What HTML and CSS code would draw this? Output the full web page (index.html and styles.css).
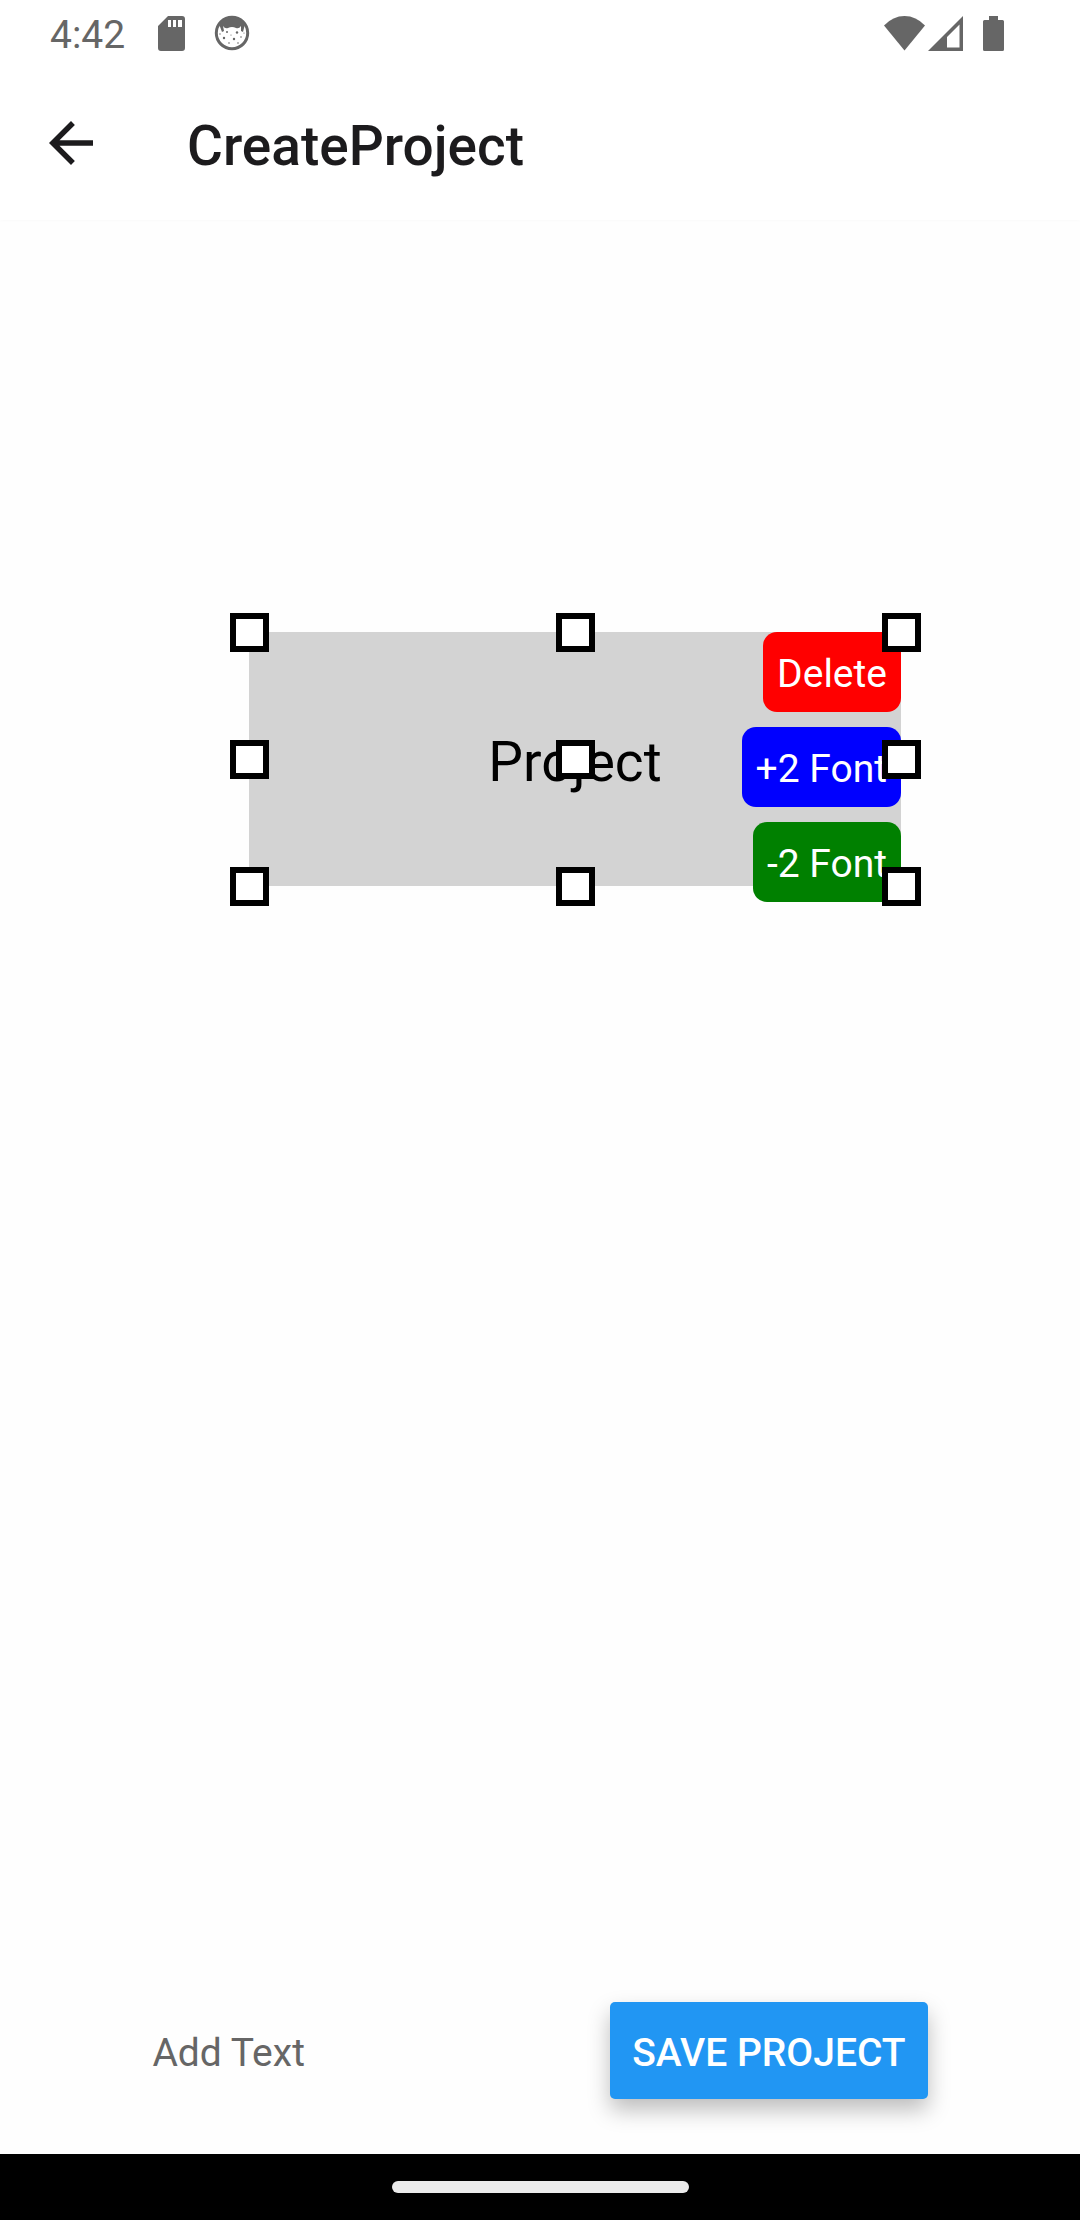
FILE: index.html
```html
<!DOCTYPE html>
<html lang="en">
<head>
<meta charset="utf-8">
<meta name="viewport" content="width=device-width, initial-scale=1">
<title>CreateProject</title>
<link rel="stylesheet" href="styles.css">
</head>
<body>
<div class="status-bar">
  <div class="status-left">
    <span class="clock">4:42</span>
    <svg class="sd-icon" viewBox="0 0 27 35" aria-hidden="true">
      <path fill="currentColor" fill-rule="evenodd" d="M10 0H24Q27 0 27 3V32Q27 35 24 35H3Q0 35 0 32V10ZM10 4V11H13V4ZM15 4V11H18V4ZM20 4V11H24V4Z"/>
    </svg>
    <svg class="face-icon" viewBox="0 0 36 36" aria-hidden="true">
      <circle cx="18" cy="18" r="15.700" fill="none" stroke="currentColor" stroke-width="3"/>
      <path fill="currentColor" d="M5 9Q10 2 18 2T31 9L29 17L27 16L27 11Q25 14 22 13Q18 11 14 13Q11 14 9 11L10 16L8 17Z"/>
      <g fill="currentColor">
        <circle cx="13" cy="17" r="1"/><circle cx="23" cy="17.500" r="1.200"/><circle cx="10" cy="23" r="1.200"/><circle cx="20" cy="24" r="1.200"/><circle cx="27" cy="22" r=".8"/><circle cx="15" cy="28" r=".8"/><circle cx="6" cy="19" r=".7"/><circle cx="17" cy="20" r=".6"/><circle cx="24" cy="28" r=".8"/><circle cx="30" cy="18" r=".6"/>
      </g>
    </svg>
  </div>
  <div class="status-right">
    <svg class="wifi-icon" viewBox="0 0 41 35" aria-hidden="true">
      <path fill="currentColor" d="M0 9.500Q9 0 20.500 0T41 9.500L20.500 34.500Z"/>
    </svg>
    <svg class="signal-icon" viewBox="0 0 35 35" aria-hidden="true">
      <path fill="currentColor" fill-rule="evenodd" d="M35 0V35H0ZM31.500 8.500L19 21V31.500H31.500Z"/>
    </svg>
    <svg class="battery-icon" viewBox="0 0 21 35" aria-hidden="true">
      <path fill="currentColor" d="M6 0H15V4H19.500Q21 4 21 5.500V33.500Q21 35 19.500 35H1.500Q0 35 0 33.500V5.500Q0 4 1.500 4H6Z"/>
    </svg>
  </div>
</div>
<header class="app-bar">
  <button class="back" type="button" aria-label="Back">
    <svg class="back-icon" viewBox="0 0 44 44" aria-hidden="true">
      <path fill="currentColor" d="M44 19.250H10.530L25.900 3.880L22 0L0 22L22 44L25.880 40.120L10.530 24.750H44Z"/>
    </svg>
  </button>
  <h1 class="title">CreateProject</h1>
</header>
<main class="editor">
  <section class="canvas">
    <div class="item">
      <span class="item-text">Project</span>
      <div class="item-actions">
        <button class="action delete" type="button">Delete</button>
        <button class="action grow" type="button">+2 Font</button>
        <button class="action shrink" type="button">-2 Font</button>
      </div>
      <i class="handle top left"></i>
      <i class="handle top center"></i>
      <i class="handle top right"></i>
      <i class="handle middle left"></i>
      <i class="handle middle center"></i>
      <i class="handle middle right"></i>
      <i class="handle bottom left"></i>
      <i class="handle bottom center"></i>
      <i class="handle bottom right"></i>
    </div>
  </section>
  <form class="toolbar">
    <input class="add-text" type="text" placeholder="Add Text" aria-label="Add Text">
    <button class="save" type="button">SAVE PROJECT</button>
  </form>
</main>
<div class="nav-bar"><span class="nav-pill"></span></div>
</body>
</html>
```
FILE: styles.css
```css
* {
  box-sizing: border-box;
}

body {
  margin: 0;
  min-height: 100vh;
  display: flex;
  flex-direction: column;
  background: #fefefe;
  color: #1c1b1d;
  font-family: Roboto, "Liberation Sans", sans-serif;
  font-size: 39px;
  line-height: 52px;
}

button,
input {
  font: inherit;
  border: 0;
  margin: 0;
  padding: 0;
}

svg {
  display: block;
}

.status-bar {
  display: flex;
  justify-content: space-between;
  height: 66px;
  padding: 8px 76px 0 50px;
  background: #fff;
  color: #666;
}

.status-left,
.status-right {
  display: flex;
  align-items: center;
  height: 50px;
}

.clock {
  padding-top: 4px;
}

.sd-icon {
  width: 27px;
  height: 35px;
  margin-left: 33px;
}

.face-icon {
  width: 36px;
  height: 36px;
  margin-left: 29px;
}

.wifi-icon {
  width: 41px;
  height: 35px;
}

.signal-icon {
  width: 35px;
  height: 35px;
  margin-left: 3px;
}

.battery-icon {
  width: 21px;
  height: 35px;
  margin-left: 20px;
}

.app-bar {
  display: flex;
  align-items: center;
  gap: 94px;
  height: 154px;
  padding: 0 49px;
  background: #fff;
  box-shadow: 0 1px 3px rgba(0, 0, 0, 0.02);
}

.back {
  background: none;
  color: inherit;
}

.back-icon {
  width: 44px;
  height: 44px;
}

.title {
  margin: 0;
  padding-top: 6px;
  font-size: 55px;
  font-weight: 500;
  line-height: 72px;
}

.editor {
  flex: 1;
  display: flex;
  flex-direction: column;
}

.canvas {
  position: relative;
  flex: 1;
}

.item {
  position: absolute;
  left: 249px;
  top: 412px;
  width: 652px;
  height: 254px;
  display: flex;
  align-items: center;
  justify-content: center;
  background: #d3d3d3;
  color: #000;
}

.item-text {
  padding-top: 6px;
  font-size: 55px;
  line-height: 72px;
}

.item-actions {
  position: absolute;
  top: 0;
  right: 0;
  display: flex;
  flex-direction: column;
  align-items: flex-end;
  gap: 15px;
}

.action {
  padding: 16px 14px 12px;
  border-radius: 14px;
  color: #fff;
}

.delete {
  background: #f00;
}

.grow {
  background: #00f;
}

.shrink {
  background: #008000;
}

.handle {
  position: absolute;
  width: 39px;
  height: 39px;
  margin: -19px 0 0 -19px;
  border: 6px solid #000;
  background: #fff;
}

.top {
  top: 0;
}

.middle {
  top: 50%;
}

.bottom {
  top: 100%;
}

.left {
  left: 0;
}

.center {
  left: 50%;
}

.right {
  left: 100%;
}

.toolbar {
  display: flex;
  align-items: center;
  justify-content: space-around;
  padding-bottom: 55px;
}

.add-text {
  width: 153px;
  height: 97px;
  padding-top: 4px;
  background: none;
  color: #000;
}

.add-text::placeholder {
  color: #666;
  opacity: 1;
}

.save {
  height: 97px;
  padding: 4px 22px 0;
  border-radius: 5px;
  background: #2196f3;
  color: #fff;
  font-weight: 500;
  box-shadow: 0 11px 22px rgba(0, 0, 0, 0.26);
}

.nav-bar {
  display: flex;
  align-items: center;
  justify-content: center;
  height: 66px;
  background: #000;
}

.nav-pill {
  width: 297px;
  height: 12px;
  border-radius: 6px;
  background: #ebebeb;
}
```
